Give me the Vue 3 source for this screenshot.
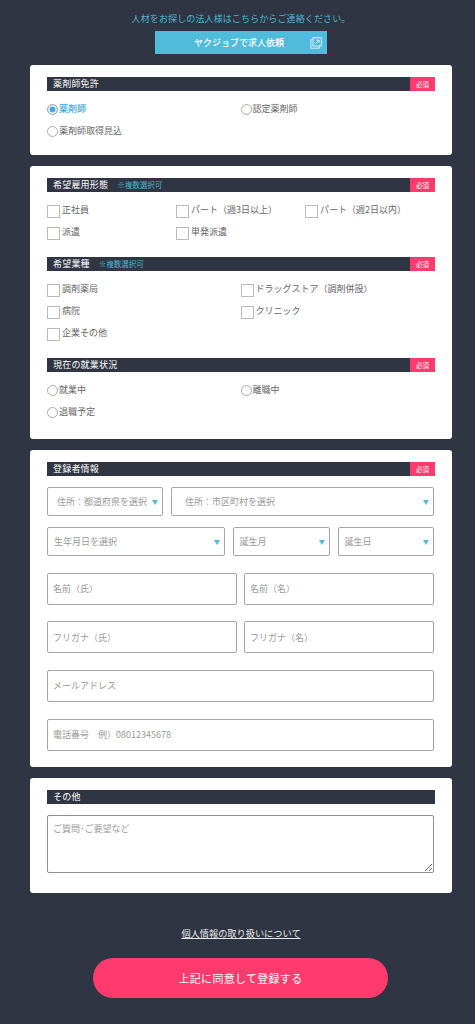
<script setup>
const licence = [
  { label: '薬剤師', checked: true },
  { label: '認定薬剤師' },
  { label: '薬剤師取得見込' }
]
const employment = ['正社員', 'パート（週3日以上）', 'パート（週2日以内）', '派遣', '単発派遣']
const industry = ['調剤薬局', 'ドラッグストア（調剤併設）', '病院', 'クリニック', '企業その他']
const status = ['就業中', '離職中', '退職予定']
const inputs = [
  ['名前（氏）', '名前（名）'],
  ['フリガナ（氏）', 'フリガナ（名）'],
  ['メールアドレス'],
  ['電話番号　例）08012345678']
]
</script>

<template>
  <div class="page">
    <p class="lead">人材をお探しの法人様はこちらからご連絡ください。</p>
    <a class="ext">
      <span>ヤクジョブで求人依頼</span>
      <svg class="ext-icon" viewBox="0 0 12 12" width="12" height="12" fill="none" stroke="#fff" stroke-width="0.8">
        <rect x="3" y="0.7" width="8.3" height="8.3" />
        <path d="M3 2.6H0.9v8.6h8.5V9" />
        <path d="M5.6 6.6l3.4-3.4M6.4 3.1H9v2.6" />
      </svg>
    </a>

    <section class="card first">
      <h2 class="bar"><span class="bar-title">薬剤師免許</span><em class="req">必須</em></h2>
      <div class="opts two">
        <label v-for="o in licence" :key="o.label" class="opt" :class="{ on: o.checked }">
          <input type="radio" name="licence" class="radio" :checked="o.checked" /><span class="r">{{ o.label }}</span>
        </label>
      </div>
    </section>

    <section class="card">
      <h2 class="bar"><span class="bar-title">希望雇用形態</span><small class="multi">※複数選択可</small><em class="req">必須</em></h2>
      <div class="opts three">
        <label v-for="o in employment" :key="o" class="opt"><input type="checkbox" class="check" /><span class="t">{{ o }}</span></label>
      </div>
      <h2 class="bar next"><span class="bar-title">希望業種</span><small class="multi">※複数選択可</small><em class="req">必須</em></h2>
      <div class="opts two">
        <label v-for="o in industry" :key="o" class="opt"><input type="checkbox" class="check" /><span class="t">{{ o }}</span></label>
      </div>
      <h2 class="bar next"><span class="bar-title">現在の就業状況</span><em class="req">必須</em></h2>
      <div class="opts two last">
        <label v-for="o in status" :key="o" class="opt"><input type="radio" name="status" class="radio" /><span class="r">{{ o }}</span></label>
      </div>
    </section>

    <section class="card">
      <h2 class="bar"><span class="bar-title">登録者情報</span><em class="req">必須</em></h2>
      <div class="sel-row r1">
        <div class="sel in"><span>住所：都道府県を選択</span></div>
        <div class="sel in"><span>住所：市区町村を選択</span></div>
      </div>
      <div class="sel-row r2">
        <div class="sel"><span>生年月日を選択</span></div>
        <div class="sel"><span>誕生月</span></div>
        <div class="sel"><span>誕生日</span></div>
      </div>
      <div class="fields">
        <div v-for="(row, i) in inputs" :key="i" class="field-row">
          <input v-for="p in row" :key="p" class="field" type="text" :placeholder="p" />
        </div>
      </div>
    </section>

    <section class="card">
      <h2 class="bar"><span class="bar-title">その他</span></h2>
      <textarea class="area" placeholder="ご質問･ご要望など"></textarea>
    </section>

    <a class="privacy">個人情報の取り扱いについて</a>
    <button class="submit" type="button">上記に同意して登録する</button>
  </div>
</template>

<style scoped>
.page {
  box-sizing: border-box;
  width: 475px;
  height: 1024px;
  padding: 12px 23px 0 30px;
  background: #2f3542;
  font-family: "Noto Sans CJK JP", "Noto Sans", sans-serif;
  font-size: 9px;
  color: #666;
  display: flex;
  flex-direction: column;
  overflow: hidden;
}
.lead {
  margin: 0;
  height: 13px;
  line-height: 13px;
  text-align: center;
  color: #4cb4d2;
  letter-spacing: 0.12px;
}
.ext {
  align-self: center;
  position: relative;
  box-sizing: border-box;
  width: 172px;
  height: 23px;
  margin-top: 6px;
  background: #4fbcdc;
  color: #fff;
  display: flex;
  align-items: center;
  justify-content: center;
  padding-right: 4px;
  font-weight: 500;
}
.ext-icon {
  position: absolute;
  right: 5px;
  top: 6px;
}
.card {
  box-sizing: border-box;
  width: 422px;
  margin-top: 11px;
  padding: 12px 17px 0;
  background: #fff;
  border-radius: 3px;
}
.first {
  height: 90px;
}
.bar {
  margin: 0;
  height: 14px;
  background: #2f3542;
  color: #fff;
  font-size: 9px;
  font-weight: 400;
  line-height: 14px;
  display: flex;
  align-items: center;
  padding-left: 6px;
}
.bar.next {
  margin-top: 14px;
}
.bar-title {
  letter-spacing: 0.2px;
}
.multi {
  margin-left: 9px;
  color: #4cb4d2;
  font-size: 7.5px;
}
.req {
  margin-left: auto;
  width: 25px;
  height: 14px;
  background: #ff3b6e;
  color: #fff;
  font-size: 6.5px;
  font-style: normal;
  text-align: center;
  line-height: 14px;
}
.opts {
  display: grid;
  margin-top: 7px;
  grid-auto-rows: 22px;
}
.opts.two {
  grid-template-columns: 193.5px 193.5px;
}
.opts.three {
  grid-template-columns: 129px 129px 129px;
}
.opts.last {
  padding-bottom: 16px;
}
.opt {
  display: flex;
  align-items: center;
  white-space: nowrap;
}
.opt.on {
  color: #41a9de;
  font-weight: 500;
}
.t {
  margin-left: 2px;
  margin-bottom: 2px;
}
.r {
  margin-bottom: 2px;
}
.radio {
  appearance: none;
  box-sizing: border-box;
  width: 11px;
  height: 11px;
  margin: 0 1px 0 0;
  border: 1px solid #aaa;
  border-radius: 50%;
  background: #fff;
  flex: none;
}
.radio:checked {
  background: #3fa9e0;
  box-shadow: inset 0 0 0 1.5px #fff;
}
.check {
  appearance: none;
  box-sizing: border-box;
  width: 13px;
  height: 13px;
  margin: 2px 0 0;
  border: 1px solid #bbb;
  background: #fff;
  flex: none;
}
.sel-row {
  display: flex;
  height: 29px;
  gap: 8px;
  margin-top: 11px;
}
.sel {
  box-sizing: border-box;
  position: relative;
  height: 29px;
  border: 1px solid #a3a6ad;
  border-radius: 2px;
  color: #9a9a9a;
  display: flex;
  align-items: center;
  padding-left: 6px;
  white-space: nowrap;
}
.sel.in {
  padding-left: 9px;
}
.sel::after {
  content: "";
  position: absolute;
  right: 4px;
  top: 12px;
  border-style: solid;
  border-width: 5px 3.5px 0;
  border-color: #4fbcdc transparent transparent;
}
.r1 .sel:nth-child(1) {
  width: 116px;
}
.r1 .sel:nth-child(2) {
  width: 263px;
  padding-left: 13px;
}
.r2 .sel:nth-child(1) {
  width: 177.5px;
}
.r2 .sel:nth-child(2) {
  width: 97px;
}
.r2 .sel:nth-child(3) {
  width: 96.5px;
}
.fields {
  display: flex;
  flex-direction: column;
  gap: 16.7px;
  width: 387px;
  margin-top: 16.5px;
  padding-bottom: 16.4px;
}
.field-row {
  display: flex;
  gap: 7px;
}
.field {
  box-sizing: border-box;
  flex: 1;
  min-width: 0;
  height: 32px;
  margin: 0;
  padding: 0 5px;
  border: 1px solid #a3a6ad;
  border-radius: 2px;
  background: #fff;
  font: inherit;
  outline: none;
}
.field::placeholder,
.area::placeholder {
  color: #9a9a9a;
  opacity: 1;
}
.area {
  display: block;
  box-sizing: border-box;
  width: 387px;
  height: 58px;
  margin: 11px 0 20px;
  padding: 6px 5px;
  border: 1px solid #8e9098;
  border-radius: 2px;
  font: inherit;
  outline: none;
}
.privacy {
  align-self: center;
  margin-top: 34px;
  height: 13px;
  line-height: 13px;
  color: #e8e8ea;
  text-decoration: underline;
  text-underline-offset: 1px;
  font-size: 9.2px;
}
.submit {
  align-self: center;
  width: 295px;
  height: 40px;
  margin-top: 18px;
  margin-right: 1px;
  border: 0;
  border-radius: 20px;
  background: #ff3b6e;
  color: #fff;
  font-family: inherit;
  font-size: 11px;
  letter-spacing: 0.3px;
}
</style>
